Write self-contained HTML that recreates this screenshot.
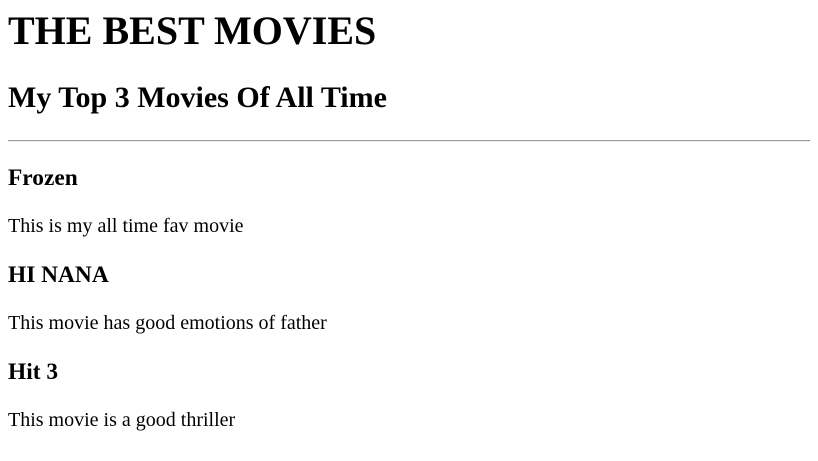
<!DOCTYPE html>
<html><head><meta charset="utf-8"><style>
body{font-family:"Liberation Serif",serif;margin:7px 8px 8px;background:#fff;color:#000;font-size:20px;}
h1{font-size:40px;margin:0 0 26.8px;}
h2{font-size:30px;margin:24.9px 0;}
hr{margin:10px 0;border:0;border-top:1px solid #9a9a9a;border-bottom:1px solid #eee;}
h3{font-size:23.4px;margin:23.4px 0;}
p{margin:20px 0;}
</style></head><body>
<h1>THE BEST MOVIES</h1>
<h2>My Top 3 Movies Of All Time</h2>
<hr>
<h3>Frozen</h3>
<p>This is my all time fav movie</p>
<h3>HI NANA</h3>
<p>This movie has good emotions of father</p>
<h3>Hit 3</h3>
<p>This movie is a good thriller</p>
</body></html>
